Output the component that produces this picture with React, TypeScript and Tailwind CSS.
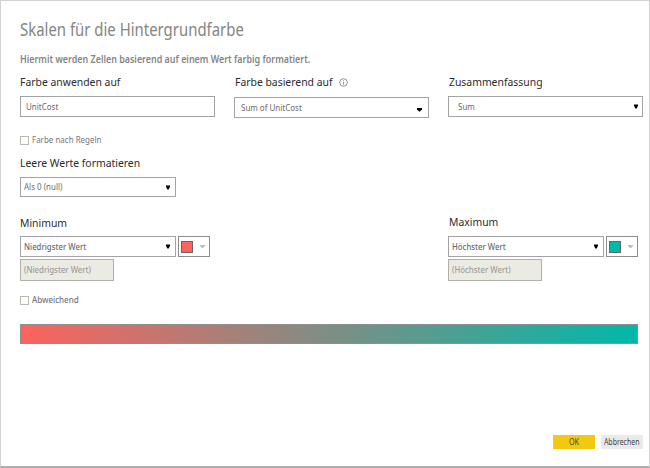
import type { ReactNode } from "react";

function Text({ children, className = "scale-x-[0.84]" }: { children: ReactNode; className?: string }) {
  return <span className={`inline-block origin-left ${className}`}>{children}</span>;
}

function Arrow() {
  return (
    <svg width="4" height="5" viewBox="0 0 4 5" className="shrink-0 text-black">
      <path d="M0 .5h4v1L2.7 4.5H1.3L0 1.5z" fill="currentColor" />
    </svg>
  );
}

function Label({ children, className = "" }: { children: ReactNode; className?: string }) {
  return (
    <div className={`flex h-4 items-center text-[11.5px] leading-4 text-[#2b2b2b] ${className}`}>
      <Text className="scale-x-[0.904]">{children}</Text>
    </div>
  );
}

function Field({ children, className = "", arrow }: { children: ReactNode; className?: string; arrow?: ReactNode }) {
  return (
    <div className={`flex shrink-0 items-center justify-between border border-[#a3a3a3] bg-white text-[9.5px] leading-3 text-[#6b6b6b] ${className}`}>
      <Text>{children}</Text>
      {arrow}
    </div>
  );
}

function ValueField({ children }: { children: ReactNode }) {
  return (
    <div className="flex h-[21px] w-[156px] items-center justify-between border border-[#a3a3a3] pr-[5px] pl-[3px] text-[9.5px] leading-3 font-medium text-[#6b6b6b]">
      <Text className="scale-x-[0.82]">{children}</Text>
      <Arrow />
    </div>
  );
}

function DisabledField({ children }: { children: ReactNode }) {
  return (
    <div className="mt-[2px] flex h-[22px] w-[94px] items-center border border-[#b0b0aa] bg-[#ebebe4] pl-[3px] text-[9.5px] leading-3 font-medium text-[#a09d99]">
      <Text className="scale-x-[0.82]">{children}</Text>
    </div>
  );
}

function Check({ children }: { children: ReactNode }) {
  return (
    <div className="flex h-3 items-center gap-[3px] text-[9.5px] leading-3 text-[#777]">
      <span className="h-[9px] w-[9px] border border-[#b9b9b0]" />
      <Text>{children}</Text>
    </div>
  );
}

function Swatch({ className }: { className: string }) {
  return (
    <div className="flex h-[21px] w-8 items-center justify-between border border-[#8b8b90] pr-1 pl-[2px]">
      <span className={`h-3 w-3 border border-[#666] ${className}`} />
      <svg width="5" height="4" viewBox="0 0 5 4">
        <path d="M0 0h5v1L3 3H2L0 1z" fill="#bdbdbd" />
      </svg>
    </div>
  );
}

export default function App() {
  return (
    <div className="flex h-[468px] w-[650px] flex-col overflow-hidden border border-b-2 border-[#d2d2d2] border-b-[#adadad] bg-white pl-[19px] font-['Noto_Sans','Open_Sans',sans-serif] whitespace-nowrap">
      <h1 className="mt-[16px] h-6 text-[17.5px] leading-6 text-[#858585]">
        <Text className="scale-x-[0.853]">Skalen für die Hintergrundfarbe</Text>
      </h1>
      <p className="mt-[11px] h-4 text-[9.75px] leading-4 font-semibold text-[#858585]">
        <Text className="scale-x-[0.915]">Hiermit werden Zellen basierend auf einem Wert farbig formatiert.</Text>
      </p>

      <div className="mt-[6px] flex h-11">
        <div className="w-[214px]">
          <Label>Farbe anwenden auf</Label>
          <Field className="mt-[6px] h-[21px] w-[195px] pl-[5px]">UnitCost</Field>
        </div>
        <div className="w-[214px]">
          <div className="flex items-center">
            <Label className="w-[105px] pl-px">Farbe basierend auf</Label>
            <svg width="9" height="9" viewBox="0 0 9 9" fill="none" stroke="#777" strokeWidth=".8">
              <circle cx="4.5" cy="4.5" r="3.8" />
              <path d="M4.5 4v2.6M4.5 2.3v.9" />
            </svg>
          </div>
          <Field
            className="mt-[7px] h-[21px] w-[195px] pr-[6px] pl-[6px]"
            arrow={
              <svg width="5" height="4" viewBox="0 0 5 4" className="mt-1">
                <path d="M0 0h5v1.3L3 3.5H2L0 1.3z" fill="black" />
              </svg>
            }
          >
            Sum of UnitCost
          </Field>
        </div>
        <div className="w-[195px]">
          <Label className="pl-px">Zusammenfassung</Label>
          <Field className="mt-[6px] h-[21px] w-[195px] pr-[4px] pl-[9px]" arrow={<Arrow />}>Sum</Field>
        </div>
      </div>

      <div className="mt-[16px]"><Check>Farbe nach Regeln</Check></div>
      <Label className="mt-[9px]">Leere Werte formatieren</Label>
      <Field className="mt-[6px] h-5 w-[156px] pr-[5px] pl-[3px]" arrow={<Arrow />}>Als 0 (null)</Field>

      <div className="mt-[17px] flex h-[68px]">
        <div className="w-[428px]">
          <Label className="mt-[1px]">Minimum</Label>
          <div className="mt-[5px] flex gap-[2px]">
            <ValueField>Niedrigster Wert</ValueField>
            <Swatch className="bg-[#fd625e]" />
          </div>
          <DisabledField>(Niedrigster Wert)</DisabledField>
        </div>
        <div>
          <Label className="pl-px">Maximum</Label>
          <div className="mt-[6px] flex gap-[2px]">
            <ValueField>Höchster Wert</ValueField>
            <Swatch className="bg-[#01b8aa]" />
          </div>
          <DisabledField>(Höchster Wert)</DisabledField>
        </div>
      </div>

      <div className="mt-[12px] font-medium"><Check>Abweichend</Check></div>
      <div className="mt-[18px] h-5 w-[618px] border border-[#8f8f8f] bg-[linear-gradient(90deg,#fd625e,#7f8e84_50%,#01b8aa)]" />

      <div className="mt-[91px] mr-[6px] flex justify-end gap-[6px] text-[8.5px] text-[#444]">
        <button className="flex h-[14px] w-[42px] items-center justify-center bg-[#f2c811] leading-[14px]">
          <span className="inline-block scale-x-[0.85]">OK</span>
        </button>
        <button className="flex h-[14px] w-[42px] items-center justify-center bg-[#eaeaea] leading-[14px]">
          <span className="inline-block scale-x-[0.82]">Abbrechen</span>
        </button>
      </div>
    </div>
  );
}
